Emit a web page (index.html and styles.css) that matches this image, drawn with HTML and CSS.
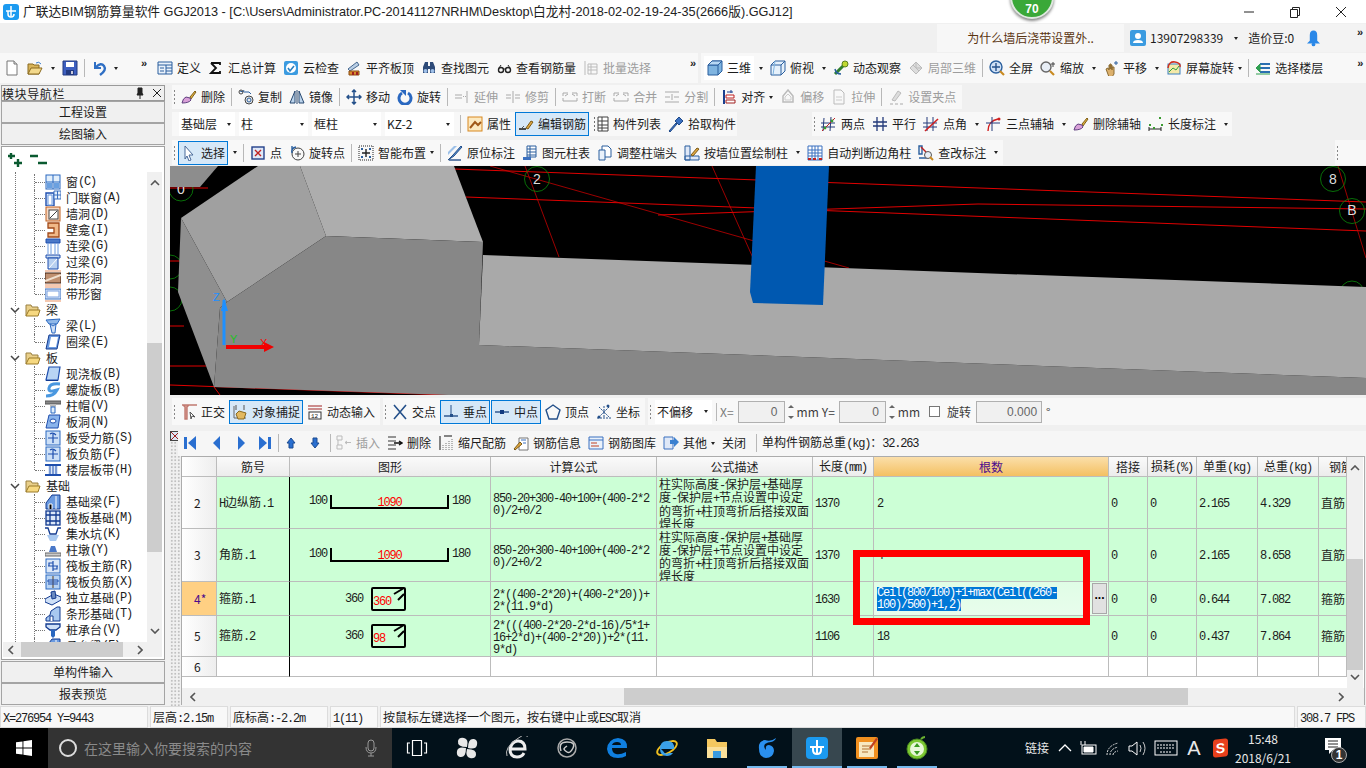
FILE: index.html
```html
<!DOCTYPE html>
<html lang="zh-CN">
<head>
<meta charset="utf-8">
<title>广联达BIM钢筋算量软件 GGJ2013</title>
<link rel="stylesheet" href="styles.css">
</head>
<body>
<svg class="defs" xmlns="http://www.w3.org/2000/svg">
<symbol id="new" viewBox="0 0 16 16"><path d="M3 1h7l3 3v11H3z" fill="#fff" stroke="#777"/><path d="M10 1v3h3" fill="#ddd" stroke="#777"/></symbol>
<symbol id="open" viewBox="0 0 16 16"><path d="M1 14V4h5l1 1h5v9z" fill="#d8b45a" stroke="#8a6a20"/><path d="M1 14l3-6h11l-3 6z" fill="#f3d98c" stroke="#8a6a20"/><path d="M9 3q3-2 5 1" fill="none" stroke="#3a7fd0"/></symbol>
<symbol id="save" viewBox="0 0 16 16"><path d="M1 1h14v14H1z" fill="#3d5fc0" stroke="#223a80"/><path d="M4 2h8v5H4z" fill="#fff"/><path d="M4 10h8v5H4z" fill="#223a80"/><path d="M9 11h2v3H9z" fill="#ccd"/></symbol>
<symbol id="undo" viewBox="0 0 16 16"><path d="M3 2v6h6" fill="none" stroke="#2f6fc4" stroke-width="2"/><path d="M4 7q5-5 8-1t-4 9" fill="none" stroke="#2f6fc4" stroke-width="2.4"/></symbol>
<symbol id="def" viewBox="0 0 16 16"><path d="M1 2h14v12H1z" fill="#eaf2fb" stroke="#2a5f9e"/><path d="M1 5h14M9 5v9M9 8h6M9 11h6M3 8h4M3 11h4" stroke="#2a5f9e" fill="none"/></symbol>
<symbol id="sum" viewBox="0 0 16 16"><path d="M3 3h9v2M3 3l5 5-5 5h9v-2" fill="none" stroke="#111" stroke-width="1.8"/></symbol>
<symbol id="cloud" viewBox="0 0 16 16"><rect x="1" y="1" width="14" height="14" rx="2" fill="#3b9be0"/><circle cx="8" cy="8" r="5" fill="#fff"/><path d="M5 8l2 3 4-5" fill="none" stroke="#2a7fc0" stroke-width="1.6"/></symbol>
<symbol id="flat" viewBox="0 0 16 16"><path d="M2 9l9-7 2 3-9 6z" fill="#b9cfe6" stroke="#47688f"/><path d="M3 11h10v4H3z" fill="#d98a2c" stroke="#8a4d10"/><path d="M6 12h2v3H6zM10 12h2v3h-2z" fill="#a02020"/></symbol>
<symbol id="find" viewBox="0 0 16 16"><path d="M2 7l2-5h3v4h2V2h3l2 5v6H9V9H7v4H2z" fill="#2d4a78"/><circle cx="4.500" cy="11" r="2" fill="#9fc0e8"/><circle cx="11.500" cy="11" r="2" fill="#9fc0e8"/></symbol>
<symbol id="glass" viewBox="0 0 16 16"><circle cx="5" cy="10" r="2.500" fill="none" stroke="#222" stroke-width="1.400"/><circle cx="12" cy="10" r="2.500" fill="none" stroke="#222" stroke-width="1.400"/><path d="M7 9h3M3 8l2-3M14 8l-2-3" stroke="#222" fill="none"/></symbol>
<symbol id="batch" viewBox="0 0 16 16"><path d="M2 1v14M5 4h9v10H5zM5 7h9M5 10h9M8 4v10" fill="none" stroke="#bbb"/></symbol>
<symbol id="cube" viewBox="0 0 16 16"><path d="M1 5l4-4h10v10l-4 4H1z" fill="#7fb4e0" stroke="#2a5f9e"/><path d="M1 5h10v10M11 5l4-4" fill="none" stroke="#2a5f9e"/><path d="M1 5l4-4h10l-4 4z" fill="#b8d8f4" stroke="#2a5f9e"/></symbol>
<symbol id="top" viewBox="0 0 16 16"><path d="M1 5l4-4h10v10l-4 4H1z" fill="#e6f1fb" stroke="#2a5f9e"/><path d="M1 5h10v10M11 5l4-4" fill="none" stroke="#2a5f9e"/><path d="M5 1l-2 14" stroke="#7fb4e0" fill="none"/></symbol>
<symbol id="orbit" viewBox="0 0 16 16"><path d="M2 14L13 3" stroke="#2f7f2f" stroke-width="3"/><circle cx="12" cy="4" r="3" fill="#c0d830" stroke="#5a8020"/><path d="M2 9q1 5 6 5" fill="none" stroke="#2a5f9e" stroke-width="1.500"/></symbol>
<symbol id="loc3d" viewBox="0 0 16 16"><path d="M2 8l6-6 6 6-6 6z" fill="#ddd" stroke="#bbb"/><path d="M5 5l6 6M8 2v6l6 0" stroke="#bbb" fill="none"/></symbol>
<symbol id="fit" viewBox="0 0 16 16"><circle cx="7" cy="7" r="6" fill="#cfe0f5" stroke="#2a5f9e" stroke-width="1.400"/><path d="M7 3v8M3 7h8" stroke="#24508a" stroke-width="1.400"/><path d="M11 11l4 4" stroke="#c88a20" stroke-width="2.200"/></symbol>
<symbol id="zoom" viewBox="0 0 16 16"><circle cx="6" cy="7" r="5" fill="#e8eef6" stroke="#666" stroke-width="1.400"/><path d="M10 11l4 4" stroke="#c88a20" stroke-width="2.200"/><path d="M13 2v5M11 4h4" stroke="#444"/></symbol>
<symbol id="pan" viewBox="0 0 16 16"><path d="M3 9l2-1 1 2V5h1v4-5h1v5-4h1v5-3h2v7l-2 3H6z" fill="#dcb06c" stroke="#8a6a30"/><path d="M13 1v4M11 3h4" stroke="#2a5f9e"/></symbol>
<symbol id="screen" viewBox="0 0 16 16"><rect x="2" y="4" width="12" height="10" fill="#f4e9a8" stroke="#3a80c0"/><path d="M3 12l4-4 3 2 3-4" stroke="#30a040" fill="none"/><path d="M2 8q1-7 7-6t5 5" fill="none" stroke="#d03020" stroke-width="1.500"/></symbol>
<symbol id="floor" viewBox="0 0 16 16"><path d="M5 4h10M5 8h10M5 12h10" stroke="#2a6fb0" stroke-width="2"/><path d="M1 8l4-4v8zM1 14h14" fill="#2f9f50" stroke="#2f9f50"/></symbol>
<symbol id="brush" viewBox="0 0 16 16"><path d="M9 8l5-6 1 1-5 7z" fill="#e0b040" stroke="#806018"/><path d="M1 14q1-5 4-6l4 1 1 2q-2 3-9 3z" fill="#d9a0d8" stroke="#604080"/></symbol>
<symbol id="copy" viewBox="0 0 16 16"><path d="M2 2l3 1 1-2" fill="none" stroke="#2a5f9e"/><circle cx="3" cy="3" r="2" fill="none" stroke="#444"/><circle cx="11" cy="11" r="4" fill="#e8e8e8" stroke="#444"/><circle cx="11" cy="11" r="2" fill="none" stroke="#2a5f9e"/><path d="M6 3h5l2 2" fill="none" stroke="#2a5f9e"/></symbol>
<symbol id="mirror" viewBox="0 0 16 16"><path d="M6 2L1 14h5zM10 2l5 12h-5z" fill="#bcd4ec" stroke="#26476f"/><path d="M8 1v14" stroke="#26476f"/></symbol>
<symbol id="move" viewBox="0 0 16 16"><path d="M8 1v14M1 8h14M6 3l2-2 2 2M6 13l2 2 2-2M3 6L1 8l2 2M13 6l2 2-2 2" fill="none" stroke="#24508a" stroke-width="1.500"/></symbol>
<symbol id="rotate" viewBox="0 0 16 16"><path d="M5 4a6 6 0 1 0 6 0" fill="none" stroke="#2a68c0" stroke-width="3"/><path d="M3 1l6 0v6z" fill="#2a68c0"/></symbol>
<symbol id="extend" viewBox="0 0 16 16"><path d="M1 6h7M1 9h7M13 2v12" stroke="#aaa" fill="none"/><path d="M9 7.500h3" stroke="#aaa" stroke-dasharray="1 1"/></symbol>
<symbol id="trim" viewBox="0 0 16 16"><path d="M1 6h5M1 9h5M10 6h5M10 9h5M8 2v12" stroke="#aaa" fill="none"/></symbol>
<symbol id="break" viewBox="0 0 16 16"><path d="M1 4h5M10 4h5M1 4v3M15 4v3M1 12h14M1 9v3M15 9v3" stroke="#aaa" fill="none"/><path d="M3 7l3-2M13 7l-3-2" stroke="#aaa"/></symbol>
<symbol id="split" viewBox="0 0 16 16"><path d="M1 3h14M1 8h5M10 8h5M1 13h14M8 5v6" stroke="#aaa" fill="none"/></symbol>
<symbol id="align" viewBox="0 0 16 16"><path d="M3 1v14" stroke="#1a3f8f" stroke-width="2"/><path d="M5 6h8v3H5z" fill="#fff" stroke="#c02020"/><path d="M5 11h9v3H5z" fill="#fff" stroke="#a02020"/><path d="M10 1v3M6 3h6" stroke="#1a3f8f"/></symbol>
<symbol id="offset" viewBox="0 0 16 16"><path d="M8 1l5 6v6H3V7z" fill="none" stroke="#bbb" stroke-width="1.500"/><path d="M8 5l3 3v3H5V8z" fill="none" stroke="#ccc"/></symbol>
<symbol id="stretch" viewBox="0 0 16 16"><path d="M3 1h7l3 3v11H3z" fill="#f8f8f8" stroke="#bbb"/><path d="M5 8h6M5 11h6" stroke="#ccc"/></symbol>
<symbol id="grip" viewBox="0 0 16 16"><path d="M10 2l3 2-6 8-3-1z" fill="#ddd" stroke="#bbb"/><path d="M2 15h3M7 15h3M12 15h3" stroke="#aaa"/></symbol>
<symbol id="attr" viewBox="0 0 16 16"><rect x="1" y="1" width="14" height="14" fill="#fce9c0" stroke="#d88820"/><path d="M3 12l5-6 3 3 3-3" stroke="#a05818" stroke-width="2" fill="none"/></symbol>
<symbol id="edit" viewBox="0 0 16 16"><path d="M1 13h7" stroke="#222" stroke-width="1.600"/><path d="M8 12l5-7 2 1-5 7z" fill="#e2a840" stroke="#7a5a18"/><path d="M3 13l3-3" stroke="#555"/></symbol>
<symbol id="list" viewBox="0 0 16 16"><path d="M1 2h2M1 6h2M1 10h2M1 14h2" stroke="#444" stroke-width="1.600" stroke-dasharray="1 1"/><path d="M5 1h10v14H5zM5 5h10M5 9h10M5 12h10M9 1v14" fill="#fff" stroke="#404040"/></symbol>
<symbol id="pick" viewBox="0 0 16 16"><path d="M1 15l7-8 1 1-7 8z" fill="#3a70c0" stroke="#204a88"/><path d="M7 5l4-4 4 4-4 4z" fill="#3a70c0" stroke="#204a88"/></symbol>
<symbol id="twopt" viewBox="0 0 16 16"><path d="M0 7h14M0 11h14M3 2l-1 13M10 1l-1 14" stroke="#243a7a" fill="none"/><path d="M1 15l13-13" stroke="#c02020"/><circle cx="4" cy="12" r="1.400" fill="#3a9a30"/><circle cx="11" cy="5" r="1.400" fill="#3a9a30"/></symbol>
<symbol id="para" viewBox="0 0 16 16"><path d="M1 6h14M1 10h14M5 1v14M11 1v14" stroke="#243a7a" stroke-width="1.300" fill="none"/></symbol>
<symbol id="angle" viewBox="0 0 16 16"><path d="M0 7h14M0 11h14M4 1v14M10 1v14" stroke="#243a7a" fill="none"/><path d="M2 15L15 3" stroke="#d02020" stroke-width="1.600"/></symbol>
<symbol id="arc" viewBox="0 0 16 16"><path d="M2 15q0-10 10-12" fill="none" stroke="#d02020" stroke-width="1.400"/><path d="M0 7h14M6 1v14" stroke="#243a7a" fill="none"/><circle cx="13" cy="3" r="1.500" fill="#d02020"/></symbol>
<symbol id="lend" viewBox="0 0 16 16"><path d="M1 11v4M13 11v4M1 13h12" stroke="#222" fill="none"/><path d="M1 8h2v2H1zM5 11h2v2H5zM11 1h2v2h-2zM13 8h2v2h-2z" fill="#3a9a30"/></symbol>
<symbol id="select" viewBox="0 0 16 16"><path d="M4 1l8 9H8l2 5-2 1-2-5-2 3z" fill="#fff" stroke="#4a6a9a"/></symbol>
<symbol id="point" viewBox="0 0 16 16"><rect x="2" y="2" width="12" height="12" fill="#dfe8f7" stroke="#23408a" stroke-width="1.400"/><path d="M5 5l6 6M11 5l-6 6" stroke="#c02020" stroke-width="1.400"/></symbol>
<symbol id="rotpt" viewBox="0 0 16 16"><circle cx="9" cy="9" r="6" fill="none" stroke="#444"/><path d="M9 6v6M6 9h6" stroke="#444"/><path d="M3 8q-1-5 4-6M3 1v4" fill="none" stroke="#2a5f9e" stroke-width="1.400"/></symbol>
<symbol id="smart" viewBox="0 0 16 16"><path d="M1 1h14v14H1z" fill="none" stroke="#222" stroke-dasharray="1 1"/><path d="M8 4v8M4 8h8" stroke="#222" stroke-width="1.400"/><path d="M3 3h2v2H3zM11 3h2v2h-2zM3 11h2v2H3zM11 11h2v2h-2z" fill="#2a5f9e"/></symbol>
<symbol id="orig" viewBox="0 0 16 16"><path d="M1 15l5-5 8-9 1 1-8 9z" fill="#5a90d0" stroke="#24508a"/><path d="M1 7l6-6h3L1 10z" fill="#9cc0e8"/><path d="M2 15h12" stroke="#24508a" stroke-width="1.400"/></symbol>
<symbol id="coltab" viewBox="0 0 16 16"><path d="M5 1h9v11H5zM8 1v11M5 4h9M5 7h9M5 10h9" fill="#fff" stroke="#2a5f9e"/><path d="M1 12h8v3H1z" fill="#3a70c0"/></symbol>
<symbol id="adjust" viewBox="0 0 16 16"><path d="M5 1h6l3 3v8H5z" fill="#fff" stroke="#2a5f9e"/><path d="M2 5h6v10H2z" fill="#eaf2fb" stroke="#2a5f9e"/></symbol>
<symbol id="wall" viewBox="0 0 16 16"><path d="M1 1h5v14H1zM1 11h14v4H1z" fill="#dfe8f7" stroke="#2a5f9e"/><path d="M7 10l6-7 2 1-6 7z" fill="#e2a840" stroke="#7a5a18"/></symbol>
<symbol id="auto" viewBox="0 0 16 16"><path d="M1 1h14v14H1zM1 5h14M1 8h14M1 11h14M5 1v14M8 1v14M11 1v14" fill="#fff" stroke="#3a70c0"/><path d="M1 13h3v2H1zM12 13h3v2h-3zM6 13h3v2H6z" fill="#c02020"/></symbol>
<symbol id="check" viewBox="0 0 16 16"><path d="M1 1h3v8H1zM1 13h8" stroke="#2a5f9e" fill="none" stroke-width="1.400"/><path d="M3 2l8 8" stroke="#c02020" stroke-width="1.400"/><circle cx="10" cy="10" r="3.500" fill="#e8eef6" stroke="#555"/><path d="M12 12l3 3" stroke="#c88a20" stroke-width="2"/></symbol>
<symbol id="ortho" viewBox="0 0 16 16"><path d="M1 1h15M2 1l2 2v12h2V3l2-2" fill="#e0a098" stroke="#c07a70" stroke-width="1.400"/><path d="M9 8l5 5-3-1-1 3z" fill="#fff" stroke="#555"/></symbol>
<symbol id="snap" viewBox="0 0 16 16"><path d="M2 2v12M2 14h12" stroke="#666"/><path d="M4 1v5M12 1v5" stroke="#555"/><path d="M4 10l3-3 7 2-2 6H6z" fill="#e2b860" stroke="#8a6a20"/></symbol>
<symbol id="dyn" viewBox="0 0 16 16"><path d="M1 2h14M1 5h14" stroke="#a02020"/><rect x="2" y="8" width="12" height="7" fill="#fff" stroke="#333"/><text x="4" y="14" font-size="6" font-family="Liberation Mono" fill="#111">12</text></symbol>
<symbol id="cross" viewBox="0 0 16 16"><path d="M2 1l12 14M14 1L2 15" stroke="#24508a" stroke-width="1.600"/></symbol>
<symbol id="perp" viewBox="0 0 16 16"><path d="M1 12h14" stroke="#24508a" stroke-width="1.400"/><path d="M8 1v9" stroke="#24508a"/><path d="M7 10h3v3H7z" fill="#24508a"/></symbol>
<symbol id="mid" viewBox="0 0 16 16"><path d="M1 8h14" stroke="#24508a" stroke-width="1.400"/><path d="M6 6h4v4H6z" fill="#123a80"/></symbol>
<symbol id="vert" viewBox="0 0 16 16"><path d="M8 1l7 5-3 9H4L1 6z" fill="none" stroke="#24508a" stroke-width="1.400"/></symbol>
<symbol id="coord" viewBox="0 0 16 16"><path d="M1 14h14M8 2v12M3 3l10 10M13 3L3 13" stroke="#24508a" fill="none" stroke-dasharray="2 1"/><circle cx="3" cy="13" r="1.500" fill="#24508a"/><circle cx="12" cy="2" r="1.500" fill="#24508a"/></symbol>
<symbol id="first" viewBox="0 0 16 16"><path d="M2 2h3v12H2zM14 1v14L6 8z" fill="#2a6fd0"/></symbol>
<symbol id="prev" viewBox="0 0 16 16"><path d="M11 1v14L4 8z" fill="#2a6fd0"/></symbol>
<symbol id="next" viewBox="0 0 16 16"><path d="M5 1v14l7-7z" fill="#2a6fd0"/></symbol>
<symbol id="last" viewBox="0 0 16 16"><path d="M11 2h3v12h-3zM2 1v14l8-7z" fill="#2a6fd0"/></symbol>
<symbol id="up" viewBox="0 0 16 16"><path d="M8 3l4 5h-2v5H6V8H4z" fill="#2a6fd0" stroke="#1a4a90"/></symbol>
<symbol id="down" viewBox="0 0 16 16"><path d="M8 13l4-5h-2V3H6v5H4z" fill="#2a6fd0" stroke="#1a4a90"/></symbol>
<symbol id="insert" viewBox="0 0 16 16"><path d="M1 1h5v4H1zM1 10h5v4H1zM2 5v5" fill="none" stroke="#bbb"/><path d="M9 7.500h6M11 6l-2 1.500L11 9" fill="none" stroke="#bbb"/></symbol>
<symbol id="delrow" viewBox="0 0 16 16"><path d="M1 2h8M1 6h8M1 10h8M1 14h8" stroke="#333"/><path d="M7 8h7M12 6l3 2-3 2" fill="none" stroke="#111" stroke-width="1.400"/></symbol>
<symbol id="scale" viewBox="0 0 16 16"><path d="M2 1v14" stroke="#111"/><path d="M5 15V9M8 15V7M11 15V5M14 15V3" stroke="#777" stroke-dasharray="1 1"/><path d="M6 1h8" stroke="#111"/></symbol>
<symbol id="info" viewBox="0 0 16 16"><path d="M6 3h9v12H6z" fill="#fff" stroke="#777"/><path d="M1 14l6-7 2 2-7 6z" fill="#e2a840" stroke="#7a5a18"/><path d="M8 5h5M10 8h3" stroke="#3a70c0"/></symbol>
<symbol id="lib" viewBox="0 0 16 16"><path d="M1 2h14v12H1z" fill="#eaf2fb" stroke="#3a70c0"/><path d="M1 5h14" stroke="#3a70c0"/><path d="M3 8h6M3 11h8" stroke="#c04020"/></symbol>
<symbol id="other" viewBox="0 0 16 16"><path d="M1 2h9v12H1z" fill="#dfe8f7" stroke="#3a70c0"/><path d="M7 5h4V2l5 5-5 5V9H7z" fill="#3a80d0"/></symbol>
<symbol id="folder" viewBox="0 0 16 16"><path d="M1 14V3h5l1 2h6v3" fill="#e9cf8a" stroke="#9a8040"/><path d="M1 14l3-6h11l-2 6z" fill="#f6d880" stroke="#9a7a28"/></symbol>
<symbol id="t-win" viewBox="0 0 16 16"><rect x="1" y="1" width="14" height="14" fill="#e2effb" stroke="#2a68c0"/><path d="M8 1v14M1 8h14" stroke="#2a68c0"/><path d="M2 9h5v5H2zM9 9h5v5H9z" fill="#6aa0e0"/></symbol>
<symbol id="t-dw" viewBox="0 0 16 16"><path d="M1 3h8v13H1z" fill="#dfeafa" stroke="#1f4fae" stroke-width="1.400"/><path d="M3 5h4v10H3z" fill="#fff" stroke="#6a9ae0"/><path d="M9 1h7v8H9zM12.500 1v8M9 5h7" fill="#e6f0fb" stroke="#3a70c0"/></symbol>
<symbol id="t-hole" viewBox="0 0 16 16"><rect x="1" y="1" width="14" height="14" fill="#f7d9c4" stroke="#c06020"/><rect x="4" y="4" width="9" height="9" fill="#fff" stroke="#444"/><path d="M5 12l7-7" stroke="#444"/></symbol>
<symbol id="t-niche" viewBox="0 0 16 16"><path d="M3 1h11v14H3v-4h6V6H3z" fill="#f0b888" stroke="#a04818" stroke-width="1.300"/></symbol>
<symbol id="t-lb" viewBox="0 0 16 16"><path d="M1 1h14v4H1z" fill="#4a78c8" stroke="#1f4fae"/><path d="M3 5v11M6 5v11M10 5v11M13 5v11" stroke="#6a9ae0"/></symbol>
<symbol id="t-lt" viewBox="0 0 16 16"><path d="M1 1h14v3H1z" fill="#c8dbf3" stroke="#1f4fae"/><path d="M3 4h10v11H3z" fill="#b8d0f0" stroke="#1f4fae"/><path d="M4 14l8-9" stroke="#fff"/></symbol>
<symbol id="t-strip" viewBox="0 0 16 16"><rect x="0" y="3" width="16" height="10" fill="#c09070" stroke="#402010"/><path d="M0 11l16-6" stroke="#f0e0d0" stroke-width="2"/><path d="M0 0h16v2H0zM0 14h16v2H0z" fill="#f4c8b0"/></symbol>
<symbol id="t-sw" viewBox="0 0 16 16"><rect x="0" y="3" width="16" height="10" fill="#dce8f8" stroke="#3a70c0"/><rect x="2" y="5" width="12" height="6" fill="#fff" stroke="#7aa0e0"/><path d="M0 0h16v2H0zM0 14h16v2H0z" fill="#f4c8b0"/></symbol>
<symbol id="t-beam" viewBox="0 0 16 16"><path d="M1 2l14-1-3 5H4z" fill="#90b8e8" stroke="#2a68c0"/><path d="M5 6l3 2 3-2-1 9H7z" fill="#cfe0f7" stroke="#2a68c0"/></symbol>
<symbol id="t-ring" viewBox="0 0 16 16"><path d="M4 1h11l-3 14H1z" fill="#6a9ae0" stroke="#123a90"/><path d="M6 3h7l-2 10H4z" fill="#fff"/></symbol>
<symbol id="t-slab" viewBox="0 0 16 16"><path d="M4 1h11l-2 13H1z" fill="#b8d4f4" stroke="#1f4fae" stroke-width="1.200"/><path d="M1 14h12v1H1z" fill="#123a90"/></symbol>
<symbol id="t-spi" viewBox="0 0 16 16"><path d="M15 2Q5 1 4 6t8 2q-3 6-11 6" fill="none" stroke="#4a98e0" stroke-width="3"/></symbol>
<symbol id="t-cap" viewBox="0 0 16 16"><path d="M0 3h16v3H0z" fill="#888" stroke="#555"/><path d="M5 6h6v3H5z" fill="#bbb"/><path d="M6 9h4v6H6z" fill="#e2effb" stroke="#2a68c0"/></symbol>
<symbol id="t-sh" viewBox="0 0 16 16"><path d="M4 1h11l-2 13H1z" fill="#8ab4ec" stroke="#1f4fae"/><ellipse cx="8" cy="7" rx="3" ry="2" fill="#fff" stroke="#1f4fae"/></symbol>
<symbol id="t-reb" viewBox="0 0 16 16"><rect x="1" y="1" width="14" height="14" fill="#cde0f7" stroke="#2a68c0"/><path d="M8 3v10M3 8h10M5 4q3-2 6 1" fill="none" stroke="#1f4fae" stroke-width="1.200"/></symbol>
<symbol id="t-band" viewBox="0 0 16 16"><path d="M0 2h16v2H0zM0 12h16v2H0z" fill="#1f4fae"/><path d="M3 4h10v8H3z" fill="#dce8f8"/><path d="M8 4v8M5 4v8M11 4v8" stroke="#1f4fae"/></symbol>
<symbol id="t-fb" viewBox="0 0 16 16"><path d="M1 15V9l6-8h8v14z" fill="#6a9ae0" stroke="#123a90"/><path d="M4 15v-5h3v5M11 2v13" stroke="#fff"/></symbol>
<symbol id="t-raft" viewBox="0 0 16 16"><rect x="1" y="1" width="14" height="14" fill="#dce8f8" stroke="#123a90" stroke-width="1.300"/><path d="M1 5h14M1 11h14M5 1v14M11 1v14" stroke="#123a90" stroke-width="1.300"/></symbol>
<symbol id="t-pit" viewBox="0 0 16 16"><path d="M0 2h3l2 6h6l2-6h3" fill="none" stroke="#123a90" stroke-width="1.300"/><path d="M2 9h12l-3 6H5z" fill="#a8c8f0"/></symbol>
<symbol id="t-pier" viewBox="0 0 16 16"><path d="M6 4h4l2 6H4z" fill="#4a78c8"/><path d="M0 11h16v3H0z" fill="#ccc" stroke="#666"/></symbol>
<symbol id="t-rm" viewBox="0 0 16 16"><rect x="1" y="1" width="14" height="14" fill="#dce8f8" stroke="#2a68c0"/><path d="M8 3v10M3 8h10M4 8V5h4M12 8v3H8" fill="none" stroke="#1f4fae" stroke-width="1.200"/></symbol>
<symbol id="t-rn" viewBox="0 0 16 16"><rect x="1" y="1" width="14" height="14" fill="#b8d4f4" stroke="#2a68c0"/><path d="M8 2v12" stroke="#888" stroke-width="2"/><path d="M3 6h10v2H3zM3 10h10" fill="none" stroke="#1f4fae"/></symbol>
<symbol id="t-iso" viewBox="0 0 16 16"><path d="M0 9l9-5 7 3v3l-9 5-7-3z" fill="#cfe0f7" stroke="#123a90"/><path d="M6 2l4-1 1 7-4 1z" fill="#6a8ac0" stroke="#123a90"/></symbol>
<symbol id="t-str" viewBox="0 0 16 16"><path d="M1 15v-3l4-3 1-4 6-4h3v14z" fill="#a8c8f0" stroke="#123a90"/><path d="M5 15v-5h3v5" fill="#fff" stroke="#123a90"/></symbol>
<symbol id="t-pile" viewBox="0 0 16 16"><path d="M1 2h14v3l-4 3H5L1 5z" fill="#cfe0f7" stroke="#123a90" stroke-width="1.300"/><path d="M6 8h4v6l-2 2-2-2z" fill="#2a68c0"/></symbol>
</svg>
<div class="screen">

<header class="titlebar">
<svg class="appicon" viewBox="0 0 16 16"><rect width="16" height="16" rx="3" fill="#1b9af0"/><path d="M8 2v10M3 7h10M5 7v3q0 3 3 3t3-3" fill="none" stroke="#fff" stroke-width="1.500"/></svg>
<span class="titletext">广联达BIM钢筋算量软件 GGJ2013 - [C:\Users\Administrator.PC-20141127NRHM\Desktop\白龙村-2018-02-02-19-24-35(2666版).GGJ12]</span>
<div class="winctl">
<svg class="wb" viewBox="0 0 12 12"><path d="M1 6h10" stroke="#222"/></svg>
<svg class="wb" viewBox="0 0 12 12"><path d="M1.500 3.500h7v8h-7zM3.500 3.500v-2h7v8h-2" fill="none" stroke="#222"/></svg>
<svg class="wb" viewBox="0 0 12 12"><path d="M1 1l10 10M11 1L1 11" stroke="#222"/></svg>
</div>
<div class="badge">70</div>
</header>

<div class="row1">
<div class="news">为什么墙后浇带设置外..</div>
<div class="user">
<svg class="i" viewBox="0 0 16 16"><rect width="16" height="16" rx="2" fill="#3b9be0"/><circle cx="8" cy="6" r="3" fill="#fff"/><path d="M3 13q0-3 5-3t5 3z" fill="#fff"/></svg>
<span>13907298339</span><span class="caretw"><i class="car"></i></span><span>造价豆:0</span>
<svg class="bell" viewBox="0 0 14 18"><path d="M7 1q4 0 4 5v6l3 3H0l3-3V6q0-5 4-5z" fill="#2a88e8"/><circle cx="7" cy="16" r="2" fill="#2a88e8"/></svg>
<span class="more">»</span>
</div>
</div>

<div class="row2">
<div class="strip s1">
<svg class="ic a1"><use href="#new"/></svg>
<svg class="ic a2"><use href="#open"/></svg>
<i class="car a3"></i>
<svg class="ic a4"><use href="#save"/></svg>
<i class="sep a5"></i>
<svg class="ic a6"><use href="#undo"/></svg>
<i class="car a7"></i>
<span class="more a8">»</span>
</div>
<div class="strip s2">
<span class="b"><svg class="ic"><use href="#def"/></svg>定义</span>
<span class="b"><svg class="ic"><use href="#sum"/></svg>汇总计算</span>
<span class="b"><svg class="ic"><use href="#cloud"/></svg>云检查</span>
<span class="b"><svg class="ic"><use href="#flat"/></svg>平齐板顶</span>
<span class="b"><svg class="ic"><use href="#find"/></svg>查找图元</span>
<span class="b"><svg class="ic"><use href="#glass"/></svg>查看钢筋量</span>
<span class="b off"><svg class="ic"><use href="#batch"/></svg>批量选择</span>
<span class="more a9">»</span>
</div>
<div class="strip s3">
<span class="b white"><svg class="ic"><use href="#cube"/></svg>三维</span><span class="c"><i class="car"></i></span>
<span class="b"><svg class="ic"><use href="#top"/></svg>俯视</span><span class="c"><i class="car"></i></span>
<span class="b"><svg class="ic"><use href="#orbit"/></svg>动态观察</span>
<span class="b off"><svg class="ic"><use href="#loc3d"/></svg>局部三维</span>
<i class="sep"></i>
<span class="b"><svg class="ic"><use href="#fit"/></svg>全屏</span>
<span class="b"><svg class="ic"><use href="#zoom"/></svg>缩放</span><span class="c"><i class="car"></i></span>
<span class="b"><svg class="ic"><use href="#pan"/></svg>平移</span><span class="c"><i class="car"></i></span>
<span class="b"><svg class="ic"><use href="#screen"/></svg>屏幕旋转<i class="car"></i></span>
<i class="sep"></i>
<span class="b"><svg class="ic"><use href="#floor"/></svg>选择楼层</span>
<span class="more a10">»</span>
</div>
</div>

<div class="work">
<nav class="nav">
<div class="navhead"><span>模块导航栏</span>
<svg class="pin" viewBox="0 0 10 12"><path d="M3 1h4v5l1 2H2l1-2zM5 8v4" fill="#222" stroke="#222"/></svg>
<svg class="pin" viewBox="0 0 10 12"><path d="M1 2l8 8M9 2l-8 8" stroke="#222"/></svg>
</div>
<div class="tab">工程设置</div>
<div class="tab">绘图输入</div>
<div class="treebox">
<div class="expand">
<svg class="ex" viewBox="0 0 22 18"><path d="M3 1v6M0 4h7M10 7v8M6 11h8" stroke="#0a5a30" stroke-width="2.400"/></svg>
<svg class="ex" viewBox="0 0 22 18"><path d="M0 4h8M8 11h9" stroke="#0a5a30" stroke-width="2.400"/></svg>
</div>
<div class="treearea">
<div class="tree">
<div class="kids">
<div class="leaf"><svg class="ti"><use href="#t-win"/></svg>窗<b>(C)</b></div>
<div class="leaf"><svg class="ti"><use href="#t-dw"/></svg>门联窗<b>(A)</b></div>
<div class="leaf"><svg class="ti"><use href="#t-hole"/></svg>墙洞<b>(D)</b></div>
<div class="leaf"><svg class="ti"><use href="#t-niche"/></svg>壁龛<b>(I)</b></div>
<div class="leaf"><svg class="ti"><use href="#t-lb"/></svg>连梁<b>(G)</b></div>
<div class="leaf"><svg class="ti"><use href="#t-lt"/></svg>过梁<b>(G)</b></div>
<div class="leaf"><svg class="ti"><use href="#t-strip"/></svg>带形洞</div>
<div class="leaf"><svg class="ti"><use href="#t-sw"/></svg>带形窗</div>
</div>
<div class="fold"><svg class="chev" viewBox="0 0 10 6"><path d="M1 1l4 4 4-4" fill="none" stroke="#444" stroke-width="1.500"/></svg><svg class="fi"><use href="#folder"/></svg>梁</div>
<div class="kids">
<div class="leaf"><svg class="ti"><use href="#t-beam"/></svg>梁<b>(L)</b></div>
<div class="leaf"><svg class="ti"><use href="#t-ring"/></svg>圈梁<b>(E)</b></div>
</div>
<div class="fold"><svg class="chev" viewBox="0 0 10 6"><path d="M1 1l4 4 4-4" fill="none" stroke="#444" stroke-width="1.500"/></svg><svg class="fi"><use href="#folder"/></svg>板</div>
<div class="kids">
<div class="leaf"><svg class="ti"><use href="#t-slab"/></svg>现浇板<b>(B)</b></div>
<div class="leaf"><svg class="ti"><use href="#t-spi"/></svg>螺旋板<b>(B)</b></div>
<div class="leaf"><svg class="ti"><use href="#t-cap"/></svg>柱帽<b>(V)</b></div>
<div class="leaf"><svg class="ti"><use href="#t-sh"/></svg>板洞<b>(N)</b></div>
<div class="leaf"><svg class="ti"><use href="#t-reb"/></svg>板受力筋<b>(S)</b></div>
<div class="leaf"><svg class="ti"><use href="#t-reb"/></svg>板负筋<b>(F)</b></div>
<div class="leaf"><svg class="ti"><use href="#t-band"/></svg>楼层板带<b>(H)</b></div>
</div>
<div class="fold"><svg class="chev" viewBox="0 0 10 6"><path d="M1 1l4 4 4-4" fill="none" stroke="#444" stroke-width="1.500"/></svg><svg class="fi"><use href="#folder"/></svg>基础</div>
<div class="kids">
<div class="leaf"><svg class="ti"><use href="#t-fb"/></svg>基础梁<b>(F)</b></div>
<div class="leaf"><svg class="ti"><use href="#t-raft"/></svg>筏板基础<b>(M)</b></div>
<div class="leaf"><svg class="ti"><use href="#t-pit"/></svg>集水坑<b>(K)</b></div>
<div class="leaf"><svg class="ti"><use href="#t-pier"/></svg>柱墩<b>(Y)</b></div>
<div class="leaf"><svg class="ti"><use href="#t-rm"/></svg>筏板主筋<b>(R)</b></div>
<div class="leaf"><svg class="ti"><use href="#t-rn"/></svg>筏板负筋<b>(X)</b></div>
<div class="leaf"><svg class="ti"><use href="#t-iso"/></svg>独立基础<b>(P)</b></div>
<div class="leaf"><svg class="ti"><use href="#t-str"/></svg>条形基础<b>(T)</b></div>
<div class="leaf"><svg class="ti"><use href="#t-pile"/></svg>桩承台<b>(V)</b></div>
<div class="leaf"><svg class="ti"><use href="#t-fb"/></svg>承台梁<b>(F)</b></div>
</div>
</div>
<div class="vbar"><svg class="arr" viewBox="0 0 10 6"><path d="M1 5l4-4 4 4" fill="none" stroke="#555" stroke-width="1.600"/></svg><svg class="arr" viewBox="0 0 10 6"><path d="M1 1l4 4 4-4" fill="none" stroke="#555" stroke-width="1.600"/></svg><div class="vthumb"></div></div>
</div>
<div class="hbar"><svg class="arrh" viewBox="0 0 6 10"><path d="M5 1L1 5l4 4" fill="none" stroke="#555" stroke-width="1.600"/></svg><div class="hthumb"></div><svg class="arrh" viewBox="0 0 6 10"><path d="M1 1l4 4-4 4" fill="none" stroke="#555" stroke-width="1.600"/></svg></div>
</div>
<div class="tab">单构件输入</div>
<div class="tab">报表预览</div>
</nav>

<main class="main">
<div class="strip r3">
<i class="hd"></i>
<span class="b"><svg class="ic"><use href="#brush"/></svg>删除</span>
<i class="sep"></i>
<span class="b"><svg class="ic"><use href="#copy"/></svg>复制</span>
<span class="b"><svg class="ic"><use href="#mirror"/></svg>镜像</span>
<i class="sep"></i>
<span class="b"><svg class="ic"><use href="#move"/></svg>移动</span>
<span class="b"><svg class="ic"><use href="#rotate"/></svg>旋转</span>
<i class="sep"></i>
<span class="b off"><svg class="ic"><use href="#extend"/></svg>延伸</span>
<span class="b off"><svg class="ic"><use href="#trim"/></svg>修剪</span>
<i class="sep"></i>
<span class="b off"><svg class="ic"><use href="#break"/></svg>打断</span>
<span class="b off"><svg class="ic"><use href="#break"/></svg>合并</span>
<span class="b off"><svg class="ic"><use href="#split"/></svg>分割</span>
<i class="sep"></i>
<span class="b"><svg class="ic"><use href="#align"/></svg>对齐<i class="car"></i></span>
<span class="b off"><svg class="ic"><use href="#offset"/></svg>偏移</span>
<span class="b off"><svg class="ic"><use href="#stretch"/></svg>拉伸</span>
<i class="sep"></i>
<span class="b off"><svg class="ic"><use href="#grip"/></svg>设置夹点</span>
</div>

<div class="r4">
<div class="strip s4a">
<span class="combo w56">基础层<i class="car"></i></span>
<span class="combo w69">柱<i class="car"></i></span>
<span class="combo w69">框柱<i class="car"></i></span>
<span class="combo w69">KZ-2<i class="car"></i></span>
<i class="sep"></i>
<span class="b"><svg class="ic"><use href="#attr"/></svg>属性</span>
<span class="b sel"><svg class="ic"><use href="#edit"/></svg>编辑钢筋</span>
<span class="b"><svg class="ic"><use href="#list"/></svg>构件列表</span>
<span class="b"><svg class="ic"><use href="#pick"/></svg>拾取构件</span>
</div>
<div class="strip s4b">
<i class="hd"></i>
<span class="b"><svg class="ic"><use href="#twopt"/></svg>两点</span>
<span class="b"><svg class="ic"><use href="#para"/></svg>平行</span>
<span class="b"><svg class="ic"><use href="#angle"/></svg>点角</span><span class="c"><i class="car"></i></span>
<span class="b"><svg class="ic"><use href="#arc"/></svg>三点辅轴</span><span class="c"><i class="car"></i></span>
<span class="b"><svg class="ic"><use href="#brush"/></svg>删除辅轴</span>
<span class="b"><svg class="ic"><use href="#lend"/></svg>长度标注</span><span class="c"><i class="car"></i></span>
</div>
</div>

<div class="r5">
<div class="strip s5a">
<i class="hd"></i>
<span class="b sel"><svg class="ic"><use href="#select"/></svg>选择</span><span class="c"><i class="car"></i></span>
<i class="sep"></i>
<span class="b"><svg class="ic"><use href="#point"/></svg>点</span>
<span class="b"><svg class="ic"><use href="#rotpt"/></svg>旋转点</span>
<i class="sep"></i>
<span class="b"><svg class="ic"><use href="#smart"/></svg>智能布置<i class="car"></i></span>
<i class="sep"></i>
<span class="b"><svg class="ic"><use href="#orig"/></svg>原位标注</span>
<span class="b"><svg class="ic"><use href="#coltab"/></svg>图元柱表</span>
<span class="b"><svg class="ic"><use href="#adjust"/></svg>调整柱端头</span>
<span class="b"><svg class="ic"><use href="#wall"/></svg>按墙位置绘制柱</span><span class="c"><i class="car"></i></span>
<span class="b"><svg class="ic"><use href="#auto"/></svg>自动判断边角柱</span>
<span class="b"><svg class="ic"><use href="#check"/></svg>查改标注</span><span class="c"><i class="car"></i></span>
</div>
<div class="endstrip"><i class="hd"></i></div>
</div>

<div class="canvas">
<svg class="scene" viewBox="0 1 1196 229" preserveAspectRatio="none">
<g fill="none" stroke="#e00000">
<path d="M284 4L1196 37M296 32L1196 66M488 50L808 39L1196 44M0 23H38M0 96H10M0 161H14M0 201H36M0 220L278 230M44 222L50 230"/>
<path d="M320 1L679 103M542 1L583 93M355 1L389 92M1168 1L1196 93" stroke-width="0.700"/>
</g>
<g fill="none" stroke="#0a8a0a" stroke-width="0.800">
<circle cx="367" cy="14" r="12.500"/><circle cx="1163" cy="14" r="12.500"/><circle cx="1182" cy="46" r="12.500"/><circle cx="11" cy="24" r="12"/><circle cx="1182" cy="128" r="12"/><circle cx="0" cy="102" r="12"/><circle cx="0" cy="134" r="12"/>
</g>
<text class="lbl" x="367" y="19">2</text><text class="lbl" x="1163" y="19">8</text><text class="lbl" x="1182" y="50">B</text><text class="lbl" x="11" y="29">0</text>
<path d="M0 1H48L30 22H0z" fill="#8d8d8d"/>
<path d="M88 1L11 53L57 137L156 71L130 1z" fill="#a0a0a0"/>
<path d="M130 1H284L313 77L156 71z" fill="#adadad"/>
<path d="M11 53L57 137L50 143L44 222L8 127z" fill="#8f8f8f"/>
<path d="M156 71L313 77L309 180L1196 213V230H278L44 222L50 143L57 137z" fill="#878787"/>
<path d="M313 90L1196 122V213L309 180z" fill="#a9a9a9"/>
<path d="M586 1H659L653 140L583 138L580 127z" fill="#0058b0"/>
<path d="M54 180V135" stroke="#1e90ff" stroke-width="3"/><path d="M54 133L51 146H58z" fill="#1e90ff"/>
<path d="M56 182H96" stroke="#f00000" stroke-width="4"/><path d="M94 177L104 182L94 187z" fill="#f00000"/>
<text class="ax az" x="43" y="136">Z</text><text class="ax ay" x="60" y="178">Y</text><text class="ax ar" x="90" y="182">X</text>
</svg>
</div>

<div class="r6">
<div class="strip s6a"><i class="hd"></i>
<span class="b"><svg class="ic"><use href="#ortho"/></svg>正交</span>
<span class="b sel"><svg class="ic"><use href="#snap"/></svg>对象捕捉</span>
<span class="b"><svg class="ic"><use href="#dyn"/></svg>动态输入</span>
</div>
<div class="strip s6b"><i class="hd"></i>
<span class="b"><svg class="ic"><use href="#cross"/></svg>交点</span>
<span class="b sel"><svg class="ic"><use href="#perp"/></svg>垂点</span>
<span class="b sel"><svg class="ic"><use href="#mid"/></svg>中点</span>
<span class="b"><svg class="ic"><use href="#vert"/></svg>顶点</span>
<span class="b"><svg class="ic"><use href="#coord"/></svg>坐标</span>
</div>
<div class="strip s6c"><i class="hd"></i>
<span class="combo w57">不偏移<i class="car"></i></span>
<i class="sep"></i>
<span class="lb gray">X=</span>
<span class="spin"><span class="val">0</span><span class="updn"><i class="tu"></i><i class="td"></i></span></span>
<span class="lb">mm</span>
<span class="lb y">Y=</span>
<span class="spin"><span class="val">0</span><span class="updn"><i class="tu"></i><i class="td"></i></span></span>
<span class="lb">mm</span>
<i class="chk"></i>
<span class="lb">旋转</span>
<span class="spin wide"><span class="val">0.000</span></span>
<span class="lb">°</span>
</div>
</div>

<div class="lower">
<div class="gripcol"><svg class="closeic" viewBox="0 0 10 10"><rect x="0.500" y="0.500" width="9" height="9" fill="#dce6f4" stroke="#444"/><path d="M1 1l8 8M9 1L1 9" stroke="#a02020"/></svg><div class="dots"></div></div>
<div class="rcol">
<div class="strip r7">
<span class="n n1"><svg class="ic"><use href="#first"/></svg></span>
<span class="n"><svg class="ic"><use href="#prev"/></svg></span>
<span class="n"><svg class="ic"><use href="#next"/></svg></span>
<span class="n"><svg class="ic"><use href="#last"/></svg></span>
<i class="sep sp1"></i>
<span class="n"><svg class="ic"><use href="#up"/></svg></span>
<span class="n"><svg class="ic"><use href="#down"/></svg></span>
<i class="sep sp2"></i>
<span class="b off"><svg class="ic"><use href="#insert"/></svg>插入</span>
<span class="b"><svg class="ic"><use href="#delrow"/></svg>删除</span>
<span class="b"><svg class="ic"><use href="#scale"/></svg>缩尺配筋</span>
<span class="b"><svg class="ic"><use href="#info"/></svg>钢筋信息</span>
<span class="b"><svg class="ic"><use href="#lib"/></svg>钢筋图库</span>
<span class="b"><svg class="ic"><use href="#other"/></svg>其他<i class="car"></i></span>
<span class="b">关闭</span>
<i class="sep sp3"></i>
<span class="total">单构件钢筋总重<b>(kg)</b>：<b>32.263</b></span>
</div>

<div class="grid">
<div class="gridtop">
<div class="tablewrap">
<table class="t">
<colgroup><col class="c0"><col class="c1"><col class="c2"><col class="c3"><col class="c4"><col class="c5"><col class="c6"><col class="c7"><col class="c8"><col class="c9"><col class="c10"><col class="c11"></colgroup>
<thead>
<tr class="h20"><th class="rh"></th><th>筋号</th><th>图形</th><th>计算公式</th><th>公式描述</th><th>长度<b>(mm)</b></th><th class="act">根数</th><th>搭接</th><th>损耗<b>(%)</b></th><th>单重<b>(kg)</b></th><th>总重<b>(kg)</b></th><th class="lastth">钢筋类型</th></tr>
</thead>
<tbody>
<tr class="h52">
<td class="rh"><span class="num">2</span></td>
<td class="jh"><b>H</b>边纵筋<b>.1</b></td>
<td class="shape"><div class="lrow"><b class="dim">100</b><div class="lbar"><b>1090</b></div><b class="dim">180</b></div></td>
<td class="ml"><span class="f"><b>850-20+300-40+100+(400-2*2</b></span><span class="f"><b>0)/2+0/2</b></span></td>
<td class="ml"><div class="d4"><span class="d">柱实际高度<b>-</b>保护层<b>+</b>基础厚</span><span class="d">度<b>-</b>保护层<b>+</b>节点设置中设定</span><span class="d">的弯折<b>+</b>柱顶弯折后搭接双面</span><span class="d">焊长度</span></div></td>
<td><b>1370</b></td><td class="gen"><b>2</b></td><td><b>0</b></td><td><b>0</b></td><td><b>2.165</b></td><td><b>4.329</b></td><td>直筋</td>
</tr>
<tr class="h53">
<td class="rh"><span class="num">3</span></td>
<td class="jh">角筋<b>.1</b></td>
<td class="shape"><div class="lrow"><b class="dim">100</b><div class="lbar"><b>1090</b></div><b class="dim">180</b></div></td>
<td class="ml"><span class="f"><b>850-20+300-40+100+(400-2*2</b></span><span class="f"><b>0)/2+0/2</b></span></td>
<td class="ml"><div class="d4"><span class="d">柱实际高度<b>-</b>保护层<b>+</b>基础厚</span><span class="d">度<b>-</b>保护层<b>+</b>节点设置中设定</span><span class="d">的弯折<b>+</b>柱顶弯折后搭接双面</span><span class="d">焊长度</span></div></td>
<td><b>1370</b></td><td class="gen"><b>4</b></td><td><b>0</b></td><td><b>0</b></td><td><b>2.165</b></td><td><b>8.658</b></td><td>直筋</td>
</tr>
<tr class="h34">
<td class="rh cur"><span class="num">4*</span></td>
<td class="jh">箍筋<b>.1</b></td>
<td class="shape"><div class="brow"><b class="dim">360</b><div class="hoop"><svg class="hk" viewBox="0 0 34 23"><path d="M23 7L33 1M27 13L33 7" stroke="#000" stroke-width="2"/></svg><b>360</b></div></div></td>
<td class="ml"><span class="f"><b>2*((400-2*20)+(400-2*20))+</b></span><span class="f"><b>2*(11.9*d)</b></span></td>
<td></td>
<td><b>1630</b></td>
<td class="gen edit"><span class="f"><span class="seltext">Ceil(800/100)+1+max(Ceil((260-</span></span><span class="f"><span class="seltext">100)/500)+1,2)</span></span><span class="dots3">...</span></td>
<td><b>0</b></td><td><b>0</b></td><td><b>0.644</b></td><td><b>7.082</b></td><td>箍筋</td>
</tr>
<tr class="h41">
<td class="rh"><span class="num">5</span></td>
<td class="jh">箍筋<b>.2</b></td>
<td class="shape"><div class="brow"><b class="dim">360</b><div class="hoop"><svg class="hk" viewBox="0 0 34 23"><path d="M23 7L33 1M27 13L33 7" stroke="#000" stroke-width="2"/></svg><b>98</b></div></div></td>
<td class="ml"><span class="f"><b>2*(((400-2*20-2*d-16)/5*1+</b></span><span class="f"><b>16+2*d)+(400-2*20))+2*(11.</b></span><span class="f"><b>9*d)</b></span></td>
<td></td>
<td><b>1106</b></td><td class="gen"><b>18</b></td><td><b>0</b></td><td><b>0</b></td><td><b>0.437</b></td><td><b>7.864</b></td><td>箍筋</td>
</tr>
<tr class="h20 blank">
<td class="rh"><span class="num">6</span></td><td class="jh"></td><td class="shape"></td><td></td><td></td><td></td><td></td><td></td><td></td><td></td><td></td><td></td>
</tr>
</tbody>
</table>
<div class="redbox"></div>
</div>
<div class="gvbar"><svg class="arr" viewBox="0 0 10 6"><path d="M1 5l4-4 4 4" fill="none" stroke="#555" stroke-width="1.600"/></svg><svg class="arr" viewBox="0 0 10 6"><path d="M1 1l4 4 4-4" fill="none" stroke="#555" stroke-width="1.600"/></svg><div class="gvthumb"></div></div>
</div>
<div class="ghbar"><svg class="arrh" viewBox="0 0 6 10"><path d="M5 1L1 5l4 4" fill="none" stroke="#555" stroke-width="1.600"/></svg><div class="ghthumb"></div><svg class="arrh" viewBox="0 0 6 10"><path d="M1 1l4 4-4 4" fill="none" stroke="#555" stroke-width="1.600"/></svg></div>
</div>
</div>
</div>
</main>
</div>

<footer class="status">
<span class="st st0"><b>X=276954 Y=9443</b></span>
<span class="st st1">层高<b>:2.15m</b></span>
<span class="st st2">底标高<b>:-2.2m</b></span>
<span class="st st3"><b>1(11)</b></span>
<span class="st st4">按鼠标左键选择一个图元，按右键中止或<b>ESC</b>取消</span>
<span class="st st5"><b>308.7 FPS</b></span>
</footer>

<div class="taskbar">
<div class="start"><svg class="win" viewBox="0 0 16 16"><path d="M0 2.300l6.500-.9v6.200H0zM7.400 1.300L16 0v7.600H7.400zM0 8.400h6.500v6.200L0 13.700zM7.400 8.400H16V16l-8.600-1.300z" fill="#fff"/></svg></div>
<div class="search">
<i class="ring"></i><span class="stext">在这里输入你要搜索的内容</span>
<svg class="mic" viewBox="0 0 12 18"><rect x="3" y="1" width="6" height="11" rx="3" fill="none" stroke="#999"/><path d="M1 8q0 6 5 6t5-6M6 14v3M3 17h6" fill="none" stroke="#999"/></svg>
</div>
<div class="apps">
<span class="app"><svg class="ai" viewBox="0 0 24 24"><path d="M7.500 4.500h9v15h-9zM5 7H2.500v10H5M19 7h2.500v10H19" fill="none" stroke="#fff" stroke-width="1.200"/></svg></span>
<span class="app"><svg class="ai" viewBox="0 0 24 24"><path d="M12 11Q2 11 3 5q1-4 6-3t3 9zM13 12Q13 2 19 3q4 1 3 6t-9 3zM12 13q10 0 9 6-1 4-6 3t-3-9zM11 12q0 10-6 9-4-1-3-6t9-3z" fill="#e8e8e8"/></svg></span>
<span class="app"><svg class="ai" viewBox="0 0 24 24"><path d="M5 13h15q0-8-7-8-6 0-8 8 0 8 7 8 5 0 7-4" fill="none" stroke="#eee" stroke-width="3"/><path d="M2 20Q-1 12 12 3t10-2" fill="none" stroke="#bbb"/></svg></span>
<span class="app"><svg class="ai" viewBox="0 0 24 24"><circle cx="12" cy="12" r="9" fill="none" stroke="#aaa" stroke-width="1.500"/><path d="M6 15q-3-9 6-9t6 6-6 4-3-3 3-3" fill="none" stroke="#ccc" stroke-width="1.500"/></svg></span>
<span class="app"><svg class="ai" viewBox="0 0 24 24"><path d="M7 12h15q1-9-9-10Q3 3 2 13q1 9 11 9 5 0 8-2v-4q-6 3-10 2-4-1-4-6zM7 9q1-3 5-3 4 0 4 3z" fill="#0f7fe0"/></svg></span>
<span class="app"><svg class="ai" viewBox="0 0 24 24"><ellipse cx="12" cy="12" rx="11" ry="5" transform="rotate(-30 12 12)" fill="none" stroke="#f0c020" stroke-width="1.800"/><path d="M6 13h13q1-8-7-8-7 0-7 8 0 7 7 7 4 0 6-3h-4q-4 2-6-2z" fill="#3aa0e8"/></svg></span>
<span class="app"><svg class="ai" viewBox="0 0 24 24"><path d="M2 3h8l2 3h10v16H2z" fill="#f4c860"/><path d="M2 11h20v11H2z" fill="#fbe09a"/><path d="M8 15h8v7H8z" fill="#3a9ae0"/></svg></span>
<span class="app"><svg class="ai" viewBox="0 0 24 24"><path d="M21 2q-5 4-11 2Q3 5 4 13q0 8 7 9 7 0 8-7 0-5-5-6-4 0-3 5-3-3-1-6 3-2 6-2 4-1 5-4z" fill="#2a90ef"/></svg></span>
<span class="app cur2"><svg class="ai" viewBox="0 0 24 24"><rect x="1" y="1" width="22" height="22" rx="4" fill="#1b9af0"/><path d="M12 4v13M5 11h14M8 11v3q0 4 4 4t4-4v-3" fill="none" stroke="#fff" stroke-width="2"/></svg></span>
<span class="app"><svg class="ai" viewBox="0 0 24 24"><rect x="1" y="1" width="22" height="22" rx="2" fill="#f09020"/><path d="M4 6h15v15H4z" fill="#f8e8c0"/><path d="M7 10h9M7 13h9M7 16h6" stroke="#b07030"/><path d="M14 12l7-10 2 1-7 10z" fill="#c04020"/></svg></span>
<span class="app"><svg class="ai" viewBox="0 0 24 24"><circle cx="12" cy="13" r="10" fill="#7cc832" stroke="#4a8a20"/><circle cx="12" cy="13" r="7" fill="#e8f8d8"/><path d="M7 13h10M12 7l-3 4h6zM12 19l-3-4h6z" fill="#3a9a20"/><path d="M16 3q2-2 4-2" stroke="#6ab030" fill="none" stroke-width="2"/></svg></span>
</div>
<div class="tray">
<span class="tr w34">链接</span>
<svg class="tico w22" viewBox="0 0 22 14"><path d="M5 10l6-6 6 6" fill="none" stroke="#fff" stroke-width="1.300"/></svg>
<svg class="tico w26" viewBox="0 0 26 16"><rect x="6" y="5" width="14" height="9" fill="none" stroke="#fff"/><path d="M8 7h9v5H8zM5 1v4M9 1v4" fill="#fff" stroke="#fff"/></svg>
<svg class="tico w24" viewBox="0 0 24 18"><path d="M5 16q0-9 11-12M8 16q0-6 8-8M11 16q0-3 5-4" fill="none" stroke="#ddd" stroke-dasharray="2 1"/></svg>
<svg class="tico w24" viewBox="0 0 24 18"><path d="M3 7h3l5-4v13l-5-4H3z" fill="none" stroke="#fff"/><path d="M14 6q2 3 0 7M17 3q4 6 0 13" fill="none" stroke="#ccc"/></svg>
<svg class="tico w32" viewBox="0 0 32 18"><rect x="5" y="2" width="22" height="14" fill="none" stroke="#fff"/><path d="M7 6h18M7 9h18M10 13h12" stroke="#fff" stroke-dasharray="2 1"/></svg>
<span class="tr big w24">A</span>
<span class="tr sg w28"><span class="sgs">S</span></span>
<span class="clock"><span>15:48</span><span>2018/6/21</span></span>
<span class="notif"><svg class="nic" viewBox="0 0 18 18"><path d="M1 1h16v12H9l-4 4v-4H1z" fill="#fff"/><path d="M4 4h10M4 7h10M4 10h10" stroke="#222"/></svg><span class="nbadge">1</span></span>
</div>
</div>

</div>
</body>
</html>
```
FILE: styles.css
```css
* { box-sizing: border-box; }
html, body { margin: 0; padding: 0; background: #f0f0f0; }
body { font: 12px/16px "Noto Sans CJK SC", "Liberation Sans", sans-serif; color: #1c1c1c; overflow: hidden; }
.defs { position: absolute; width: 0; height: 0; }
.screen { width: 1366px; height: 768px; display: flex; flex-direction: column; overflow: hidden; position: relative; }
i { font-style: normal; display: block; }
b { font-weight: normal; }

/* Title bar */
.titlebar { height: 23px; background: #fff; display: flex; align-items: center; padding-left: 3px; position: relative; flex: none; }
.appicon { width: 16px; height: 16px; margin-right: 4px; flex: none; }
.titletext { font: 12.730px/16px "Liberation Sans", "Noto Sans CJK SC", sans-serif; white-space: nowrap; color: #222; }
.winctl { margin-left: auto; display: flex; }
.wb { width: 12px; height: 12px; margin: 0 17px; }
.winctl .wb:last-child { margin-right: 19px; }
.badge { position: absolute; left: 1010px; top: -25px; width: 44px; height: 44px; border-radius: 50%; background: #3aa838; border: 2px solid #dfe8df; box-shadow: 0 2px 3px #888; color: #fff; font: bold 12px/12px "Liberation Sans", sans-serif; text-align: center; padding-top: 26px; }

/* Top rows */
.row1 { height: 30px; flex: none; display: flex; padding: 1px 0 1px 937px; }
.news { width: 187px; height: 28px; background: #f7f7f7; color: #5a3410; text-align: center; line-height: 27px; }
.user { display: flex; align-items: center; height: 28px; margin-left: 6px; flex: 1; background: #f3f3f3; gap: 4px; position: relative; }
.caretw { width: 17px; display: flex; justify-content: center; }
.bell { width: 13px; height: 18px; margin-left: 9px; }
.i { width: 16px; height: 16px; }
.more { font: bold 11px/10px "Liberation Sans", sans-serif; color: #222; }
.user .more { position: absolute; right: 3px; top: 3px; }
.row2 { height: 30px; flex: none; display: flex; }
.strip { display: flex; align-items: center; background: #f8f8f8; height: 100%; gap: 1px; }
.s1 { width: 151px; height: 30px; gap: 0; }
.s2 { width: 547px; padding-left: 3px; }
.s3 { flex: 1; margin-left: 3px; padding-left: 3px; }
.a1 { margin-left: 4px; }
.a2 { margin-left: 7px; }
.a3 { margin-left: 8px; }
.a4 { margin-left: 7px; }
.a5 { margin-left: 6px !important; margin-right: 0 !important; }
.a6 { margin-left: 7px; }
.a7 { margin-left: 6px; }
.a8 { margin: -10px 0 0 23px; }
.a9 { margin: -10px 0 0 35px; }
.a10 { margin: -10px 0 0 30px; }
.ic { width: 16px; height: 16px; flex: none; display: block; }
.b { display: inline-flex; align-items: center; gap: 4px; padding: 0 3px; height: 24px; white-space: nowrap; flex: none; }
.off { color: #9d9d9d; }
.white { background: #fff; }
.sel { background: #d6e8f8; outline: 1px solid #0078d7; outline-offset: -1px; }
.c { width: 11px; display: flex; justify-content: center; flex: none; }
.car { width: 0; height: 0; border: 2.500px solid transparent; border-top: 3px solid #222; border-bottom: 0; flex: none; }
.sep { width: 1px; height: 18px; background: #b8b8b8; margin: 0 2px; flex: none; }
.hd { width: 3px; height: 16px; margin: 0 1px; flex: none; background-image: radial-gradient(#888 0.8px, transparent 1px); background-size: 3px 4px; }

/* Work area */
.work { height: 621px; flex: none; display: flex; margin-top: 2px; }
.nav { width: 165px; display: flex; flex-direction: column; flex: none; padding: 0 0 1px 1px; }
.navhead { height: 16px; display: flex; align-items: center; border: 1px solid #9a9a9a; letter-spacing: 0.600px; padding-right: 2px; line-height: 13px; flex: none; }
.navhead span { flex: 1; }
.pin { width: 10px; height: 12px; margin-left: 7px; }
.tab { height: 22px; flex: none; border: 1px solid #a4a4a4; text-align: center; line-height: 20px; background: #f0f0f0; }
.treebox { flex: 1; border: 1px solid #a0a0a0; background: #fff; margin: 1px 0; display: flex; flex-direction: column; padding: 1px 2px 1px 1px; min-height: 0; }
.expand { height: 24px; flex: none; display: flex; padding: 4px 0 0 5px; }
.ex { width: 22px; height: 18px; }
.treearea { height: 470px; flex: none; display: flex; overflow: hidden; }
.tree { flex: 1; position: relative; padding-top: 2px; overflow: hidden; line-height: 16px; }
.tree::before { content: ""; position: absolute; left: 12px; top: 0; bottom: 0; border-left: 1px dotted #777; }
.kids { position: relative; }
.leaf { height: 16px; display: flex; align-items: center; padding-left: 42px; position: relative; white-space: nowrap; }
.leaf b, .total b, .t b, .st b { font-family: "Liberation Mono", monospace; letter-spacing: -1.200px; }
.leaf::before { content: ""; position: absolute; left: 31px; top: 0; bottom: 0; width: 11px; border-left: 1px dotted #777; }
.leaf::after { content: ""; position: absolute; left: 32px; top: 8px; width: 10px; border-top: 1px dotted #777; }
.leaf:last-child::before { bottom: 8px; }
.ti { width: 16px; height: 16px; margin-right: 5px; position: relative; z-index: 1; flex: none; }
.fold { height: 16px; display: flex; align-items: center; position: relative; z-index: 1; padding-left: 7px; }
.chev { width: 10px; height: 6px; margin-right: 5px; background: #fff; }
.fi { width: 16px; height: 16px; margin-right: 5px; }
.vbar, .gvbar { width: 15px; flex: none; background: #f0f0f0; position: relative; }
.vthumb { position: absolute; left: 0; right: 0; top: 171px; height: 209px; background: #cdcdcd; }
.arr { width: 10px; height: 6px; position: absolute; left: 3px; top: 8px; z-index: 1; }
.arr + .arr { top: auto; bottom: 8px; }
.hbar, .ghbar { height: 15px; flex: none; background: #f0f0f0; display: flex; align-items: center; }
.arrh { width: 6px; height: 10px; flex: none; margin: 0 5px; }
.hthumb { width: 102px; height: 15px; background: #cdcdcd; margin: 0 9px 0 2px; }

/* Main */
.main { width: 1196px; margin-left: 5px; display: flex; flex-direction: column; flex: none; }
.r3 { width: 790px; height: 24px; margin-left: 2px; flex: none; }
.r4 { height: 24px; margin-top: 3px; display: flex; flex: none; }
.s4a { width: 565px; margin-left: 2px; padding-left: 7px; }
.s4a .combo { margin-right: 3px; }
.s4b { width: 420px; margin-left: 75px; }
.combo { background: #fff; height: 24px; display: flex; align-items: center; justify-content: space-between; padding: 0 4px 0 2px; flex: none; }
.w56 { width: 56px; } .w57 { width: 57px; } .w69 { width: 69px; }
.r5 { height: 25px; margin-top: 4px; display: flex; flex: none; }
.s5a { width: 831px; margin-left: 2px; }
.endstrip { width: 31px; margin-left: auto; background: #f8f8f8; display: flex; align-items: center; }
.canvas { height: 229px; background: #000; flex: none; margin-top: 1px; }
.scene { display: block; width: 1196px; height: 229px; }
.lbl { font: 14px "Liberation Sans", sans-serif; fill: #ddd; text-anchor: middle; }
.ax { font: 11px "Liberation Sans", sans-serif; }
.az { fill: #1e90ff; } .ay { fill: #22c022; } .ar { fill: #f00; }

.r6 { height: 27px; margin-top: 3px; display: flex; flex: none; }
.s6a { width: 208px; margin-left: 2px; }
.s6b { width: 262px; margin-left: 3px; }
.s6c { margin-left: 3px; flex: 1; gap: 0; }
.s6c .combo { margin-left: 2px; }
.s6c .sep { margin: 0 3px 0 4px; }
.lb { color: #3c3c3c; }
.gray { color: #7a7a7a; }
.spin { width: 59px; height: 22px; display: flex; margin: 0 0 0 4px; flex: none; }
.val { flex: 1; background: #f0f0f0; border: 1px solid #b0b0b0; text-align: right; padding-right: 6px; color: #666; line-height: 20px; font-family: "Liberation Sans", sans-serif; }
.updn { width: 12px; display: flex; flex-direction: column; justify-content: space-between; align-items: center; padding: 4px 0; }
.tu { border: 3px solid transparent; border-bottom: 3px solid #666; border-top: 0; }
.td { border: 3px solid transparent; border-top: 3px solid #666; border-bottom: 0; }
.y { margin-left: 3px; }
.chk { width: 11px; height: 11px; border: 1px solid #777; background: #fff; margin: 0 7px 0 9px; flex: none; }
.spin.wide { width: 66px; margin: 0 4px 0 5px; flex: none; }
.spin.wide .val { padding-right: 4px; }

.lower { display: flex; flex: 1; margin-top: 6px; min-height: 0; }
.gripcol { width: 11px; flex: none; display: flex; flex-direction: column; }
.closeic { width: 10px; height: 10px; flex: none; }
.dots { flex: 1; background-image: radial-gradient(#c0c0c0 1px, transparent 1.200px); background-size: 3.500px 3.500px; }
.rcol { flex: 1; display: flex; flex-direction: column; }
.r7 { height: 25px; flex: none; background: #f6f6f6; padding: 0 0 1px 0; gap: 0; margin-left: -3px; }
.r7 .b { margin-right: 1px; }
.n { width: 24px; height: 24px; display: flex; align-items: center; justify-content: center; flex: none; }
.n1 { margin-right: 3px; }
.r7 .sep { margin: 0; }
.r7 .sp1 { margin: 0 0 0 1px; }
.r7 .sp2 { margin: 0 2px 0 3px; }
.r7 .sp3 { margin: 0 0 0 6px; }
.total { white-space: nowrap; margin-left: 5px; }

/* Grid */
.grid { height: 249px; width: 1184px; flex: none; border: 1px solid #acacac; display: flex; flex-direction: column; background: #fff; }
.gridtop { height: 231px; display: flex; flex: none; }
.tablewrap { width: 1165px; position: relative; flex: none; }
.t { table-layout: fixed; width: 1165px; border-collapse: separate; border-spacing: 0; }
.c0 { width: 35px; } .c1 { width: 73px; } .c2 { width: 201px; } .c3 { width: 166px; } .c4 { width: 156px; } .c5 { width: 61px; } .c6 { width: 235px; } .c7 { width: 39px; } .c8 { width: 49px; } .c9 { width: 61px; } .c10 { width: 61px; } .c11 { width: 28px; }
.t th, .t td { border-right: 1px solid #bcbcbc; border-bottom: 1px solid #bcbcbc; padding: 0 0 0 2px; white-space: nowrap; overflow: hidden; font-weight: normal; vertical-align: middle; }
.t th { background: linear-gradient(#fafafa, #ececec); text-align: center; height: 20px; padding: 0; }
.t th.lastth { text-align: left; padding-left: 10px; }
.t td { background: #ccffd6; }
.t th.act { background: linear-gradient(#fbdfaa, #f4c062); color: #4b0a8c; }
.t th.rh, .t td.rh { background: linear-gradient(90deg, #fff, #eee); padding-left: 12px; }
.t td.cur { background: #ffd083; color: #4b0a8c; }
.blank td { background: #fff; }
.h20 td { height: 20px; } .h52 td { height: 52px; } .h53 td { height: 53px; } .h34 td { height: 34px; } .h41 td { height: 41px; }
.t td.jh { border-right-color: #000; }
.t td.ml { padding-left: 2px; }
.f { display: block; height: 12px; line-height: 12px; }
.d4 { height: 51px; }
.d { display: block; height: 13.300px; line-height: 13px; }
.t td.shape { padding: 0; }
.t td.gen { padding-left: 3px; }
.t td.edit { background: linear-gradient(#e0fde6, #e8fdec); position: relative; vertical-align: top; padding-top: 3px; overflow: visible; }
.seltext { display: inline-block; height: 12px; background: #0078d7; color: #fff; font-family: "Liberation Mono", monospace; letter-spacing: -1.200px; }
.dots3 { position: absolute; right: 1px; top: 1px; width: 15px; height: 31px; background: #e1e1e1; border: 1px solid #a8a8a8; text-align: center; font: bold 12px/22px "Liberation Sans", sans-serif; color: #000; letter-spacing: 0; }
.lrow { display: flex; align-items: flex-end; padding-left: 19px; margin-top: -2px; }
.dim { width: 21px; flex: none; line-height: 14px; margin-bottom: 1px; }
.lbar { width: 119px; height: 14px; border: solid #000; border-width: 0 2px 2px; text-align: center; color: #f00; line-height: 12px; flex: none; }
.lrow .dim:last-child { margin-left: 3px; }
.brow { display: flex; align-items: center; padding-left: 55px; }
.brow .dim { width: 26px; margin-bottom: 0; }
.hoop { width: 35px; height: 24px; border: 2px solid #000; border-radius: 2px; color: #f00; position: relative; line-height: 14px; display: flex; align-items: flex-end; flex: none; }
.hk { position: absolute; left: -2px; top: -2px; width: 34px; height: 23px; }
.redbox { position: absolute; left: 671px; top: 93px; width: 237px; height: 75px; border: 7px solid #f00; pointer-events: none; }
.gvbar { width: 16px; }
.gvthumb { position: absolute; left: 0; right: 0; top: 102px; height: 111px; background: #cdcdcd; }
.ghbar { height: 17px; }
.ghbar .arrh:first-child { margin-left: 8px; }
.ghthumb { width: 564px; height: 17px; background: #cdcdcd; margin-left: 423px; margin-right: 145px; }

/* Status */
.status { height: 22px; flex: none; display: flex; gap: 2px; }
.st { background: #f8f8f8; border: 1px solid #dcdcdc; padding-left: 2px; white-space: nowrap; overflow: hidden; line-height: 20px; flex: none; }
.st0 { width: 148px; } .st1 { width: 78px; } .st2 { width: 98px; } .st3 { width: 48px; } .st4 { width: 915px; } .st5 { width: 69px; }

/* Taskbar */
.taskbar { height: 40px; flex: none; display: flex; background: #02111a; color: #fff; }
.start { width: 48px; background: #000; display: flex; align-items: center; justify-content: center; flex: none; }
.win { width: 16px; height: 16px; }
.search { width: 344px; background: #333; display: flex; align-items: center; flex: none; padding-left: 11px; }
.ring { width: 18px; height: 18px; border: 2px solid #ddd; border-radius: 50%; flex: none; }
.stext { color: #8a8a8a; font-size: 14px; margin-left: 7px; flex: 1; }
.mic { width: 12px; height: 18px; margin-right: 15px; }
.apps { display: flex; flex: none; }
.app { width: 50px; height: 40px; display: flex; align-items: center; justify-content: center; position: relative; flex: none; }
.ai { width: 24px; height: 24px; }
.app:nth-child(n+8)::after { content: ""; position: absolute; left: 5px; right: 5px; bottom: 0; height: 2px; background: #76b9ed; }
.app.cur2 { background: #37474f; }
.app.cur2::after { left: 0; right: 0; }
.tray { margin-left: auto; width: 346px; display: flex; align-items: center; flex: none; }
.tr { text-align: center; color: #e8e8e8; flex: none; }
.tico { height: 18px; flex: none; }
.w34 { width: 34px; } .w22 { width: 22px; } .w26 { width: 26px; } .w24 { width: 24px; } .w32 { width: 32px; } .w28 { width: 28px; }
.big { font: 20px "Liberation Sans", sans-serif; }
.sgs { display: inline-block; width: 15px; height: 18px; background: #e8401c; color: #fff; font: bold 14px/18px "Liberation Sans", sans-serif; border-radius: 3px; transform: skewY(-6deg); }
.clock { width: 58px; display: flex; flex-direction: column; align-items: center; line-height: 19px; font-size: 12px; color: #e8e8e8; flex: none; }
.notif { margin-left: 8px; width: 66px; position: relative; flex: none; height: 40px; display: flex; align-items: center; justify-content: center; }
.nic { width: 18px; height: 18px; margin-top: -4px; }
.nbadge { position: absolute; left: 31px; top: 19px; width: 16px; height: 16px; border-radius: 50%; background: #333; border: 1px solid #aaa; font: bold 12px/14px "Liberation Sans", sans-serif; text-align: center; color: #fff; }
```
